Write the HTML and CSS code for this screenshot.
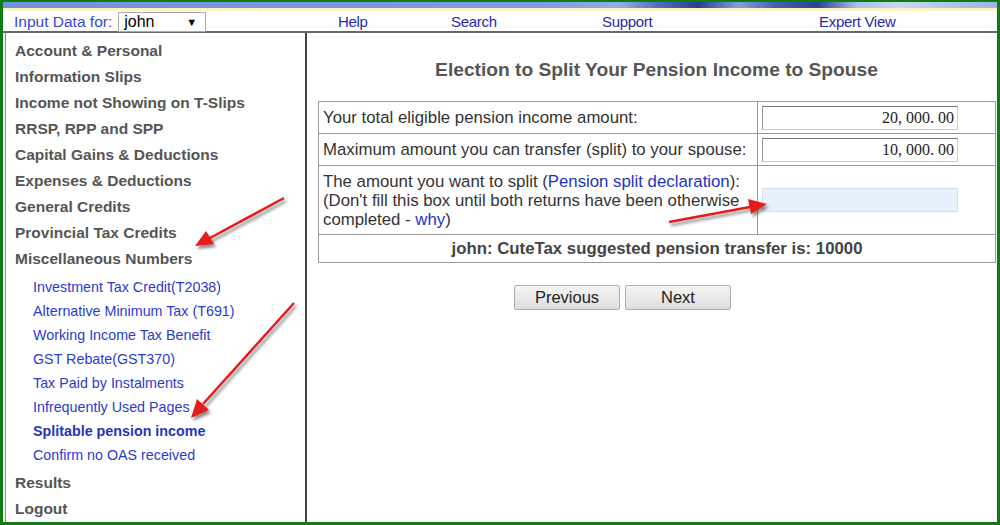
FILE: index.html
```html
<!DOCTYPE html>
<html>
<head>
<meta charset="utf-8">
<link rel="stylesheet" href="styles.css">
</head>
<body>
<div class="frame">
  <div class="strip"></div>
  <div class="cream"></div>
  <div class="nav">
    <span class="input-label">Input Data for:</span>
    <div class="select"><span>john</span><span class="caret">&#9660;</span></div>
    <a class="nav-link help">Help</a>
    <a class="nav-link search">Search</a>
    <a class="nav-link support">Support</a>
    <a class="nav-link expert">Expert View</a>
  </div>
  <div class="body">
    <aside class="side">
      <div class="sec">Account &amp; Personal</div>
      <div class="sec">Information Slips</div>
      <div class="sec">Income not Showing on T-Slips</div>
      <div class="sec">RRSP, RPP and SPP</div>
      <div class="sec">Capital Gains &amp; Deductions</div>
      <div class="sec">Expenses &amp; Deductions</div>
      <div class="sec">General Credits</div>
      <div class="sec">Provincial Tax Credits</div>
      <div class="sec">Miscellaneous Numbers</div>
      <ul class="subs">
        <li>Investment Tax Credit(T2038)</li>
        <li>Alternative Minimum Tax (T691)</li>
        <li>Working Income Tax Benefit</li>
        <li>GST Rebate(GST370)</li>
        <li>Tax Paid by Instalments</li>
        <li>Infrequently Used Pages</li>
        <li class="active">Splitable pension income</li>
        <li>Confirm no OAS received</li>
      </ul>
      <div class="sec results">Results</div>
      <div class="sec">Logout</div>
    </aside>
    <main class="main">
      <h1 class="title">Election to Split Your Pension Income to Spouse</h1>
      <table class="form">
        <tr class="r1">
          <td class="lab">Your total eligible pension income amount:</td>
          <td class="val"><div class="box">20, 000. 00</div></td>
        </tr>
        <tr class="r2">
          <td class="lab">Maximum amount you can transfer (split) to your spouse:</td>
          <td class="val"><div class="box">10, 000. 00</div></td>
        </tr>
        <tr class="r3">
          <td class="lab">The amount you want to split (<a class="lnk">Pension split declaration</a>):<br>(Don't fill this box until both returns have been otherwise<br>completed - <a class="lnk">why</a>)</td>
          <td class="val"><div class="box empty"></div></td>
        </tr>
        <tr class="r4">
          <td class="sugg" colspan="2">john: CuteTax suggested pension transfer is: 10000</td>
        </tr>
      </table>
      <div class="buttons">
        <button class="btn prev">Previous</button>
        <button class="btn next">Next</button>
      </div>
    </main>
  </div>
  <svg class="arrows" width="1000" height="525" viewBox="0 0 1000 525">
    <defs>
      <filter id="sh" x="-20%" y="-20%" width="140%" height="140%">
        <feGaussianBlur in="SourceAlpha" stdDeviation="1.6"/>
        <feOffset dx="2" dy="3"/>
        <feComponentTransfer><feFuncA type="linear" slope="0.45"/></feComponentTransfer>
        <feMerge><feMergeNode/><feMergeNode in="SourceGraphic"/></feMerge>
      </filter>
    </defs>
    <g filter="url(#sh)" fill="#e31b1b" stroke="#e31b1b">
      <line x1="284" y1="198" x2="210" y2="238" stroke-width="2.5"/>
      <polygon points="195,246 206,231 214,244" stroke="none"/>
      <line x1="294" y1="303" x2="203" y2="404" stroke-width="2.5"/>
      <polygon points="191,418 197,399 209,410" stroke="none"/>
      <line x1="669" y1="222" x2="750" y2="207" stroke-width="2.5"/>
      <polygon points="767,204 748,199 751,214" stroke="none"/>
    </g>
  </svg>
</div>
</body>
</html>
```

FILE: styles.css
```css
* { box-sizing: border-box; }
html, body { margin: 0; padding: 0; }
body {
  width: 1000px;
  height: 525px;
  overflow: hidden;
  font-family: "Liberation Sans", Arial, sans-serif;
  background: #fff;
}
.frame {
  position: relative;
  width: 1000px;
  height: 525px;
  border: 3px solid #117a11;
  border-top-width: 2px;
  display: flex;
  flex-direction: column;
  background: #fff;
}
.strip {
  height: 6px;
  background: linear-gradient(90deg, #6f93d9 0%, #7a9ee0 55%, #8fb0e6 62%, #4e6fb8 66%, #27418a 70%, #7fa0dd 74%, #3f5fa6 78%, #2a4690 82%, #a8c2ea 86%, #c8d8f0 90%, #9ab6e6 100%);
}
.cream {
  height: 3px;
  background: #fbf3c6;
}
.nav {
  height: 22px;
  display: flex;
  align-items: center;
  border-bottom: 2px solid #666;
  position: relative;
  font-size: 15px;
  padding-top: 1px;
}
.input-label {
  color: #3747d0;
  margin-left: 11px;
  font-size: 15.5px;
}
.select {
  margin-left: 6px;
  width: 88px;
  height: 20px;
  border: 1px solid #aaa;
  display: flex;
  align-items: center;
  justify-content: space-between;
  padding: 0 8px 0 5px;
  font-size: 16px;
  color: #000;
}
.caret { font-size: 11px; }
.nav-link {
  position: absolute;
  top: 2px;
  color: #2a2aa8;
  font-size: 15px;
  letter-spacing: -0.3px;
}
.help { left: 335px; }
.search { left: 448px; }
.support { left: 599px; }
.expert { left: 816px; }

.body {
  flex: 1;
  display: flex;
  min-height: 0;
}
.side {
  width: 302px;
  flex: none;
  margin-left: 2px;
  border-left: 1px solid #888;
  border-right: 2px solid #444;
  padding: 5px 0 0 9px;
}
.sec {
  font-weight: bold;
  color: #555;
  font-size: 15.5px;
  line-height: 26px;
  height: 26px;
}
.results { margin-top: 3px; }
.subs {
  list-style: none;
  margin: 3px 0 0 0;
  padding: 0 0 0 18px;
}
.subs li {
  font-size: 14.3px;
  line-height: 24px;
  height: 24px;
  color: #2a3cc8;
}
.subs li.active {
  font-weight: bold;
  color: #1f36b8;
}

.main {
  flex: 1;
  padding: 0 0 0 11px;
}
.title {
  margin: 25px 0 0 0;
  height: 24px;
  line-height: 24px;
  font-size: 19.2px;
  font-weight: bold;
  color: #555;
  text-align: center;
  padding-right: 2px;
}
.form {
  margin-top: 19px;
  width: 678px;
  border-collapse: collapse;
  border: 1px solid #999;
  font-size: 16.8px;
  color: #333;
}
.form td {
  border: 1px solid #999;
  padding: 0 4px;
}
.lab { width: 439px; }
.r1 { height: 32px; }
.r2 { height: 32px; }
.r3 { height: 69px; }
.r3 .lab { line-height: 19px; padding-top: 1px; }
.r4 { height: 28px; }
.val { padding: 0 4px; }
.box {
  width: 196px;
  height: 24px;
  border: 1px solid #ccc;
  border-top-color: #777;
  border-left-color: #999;
  font-family: "Liberation Serif", "Times New Roman", serif;
  font-size: 16px;
  color: #222;
  text-align: right;
  line-height: 22px;
  padding-right: 3px;
}
.box.empty {
  background: #e6f1fd;
  border-color: #d4dde8;
}
.lnk { color: #1c35bd; }
.sugg {
  text-align: center;
  font-weight: bold;
  color: #444;
}
.buttons {
  display: flex;
  gap: 5px;
  margin: 22px 0 0 196px;
}
.btn {
  height: 25px;
  border: 1px solid #adadad;
  border-radius: 2px;
  background: linear-gradient(#f4f4f4, #dedede);
  font-family: "Liberation Sans", Arial, sans-serif;
  font-size: 16.5px;
  color: #222;
  padding: 0;
}
.prev { width: 106px; }
.next { width: 106px; }
.arrows {
  position: absolute;
  left: -3px;
  top: -2px;
  pointer-events: none;
}
```
